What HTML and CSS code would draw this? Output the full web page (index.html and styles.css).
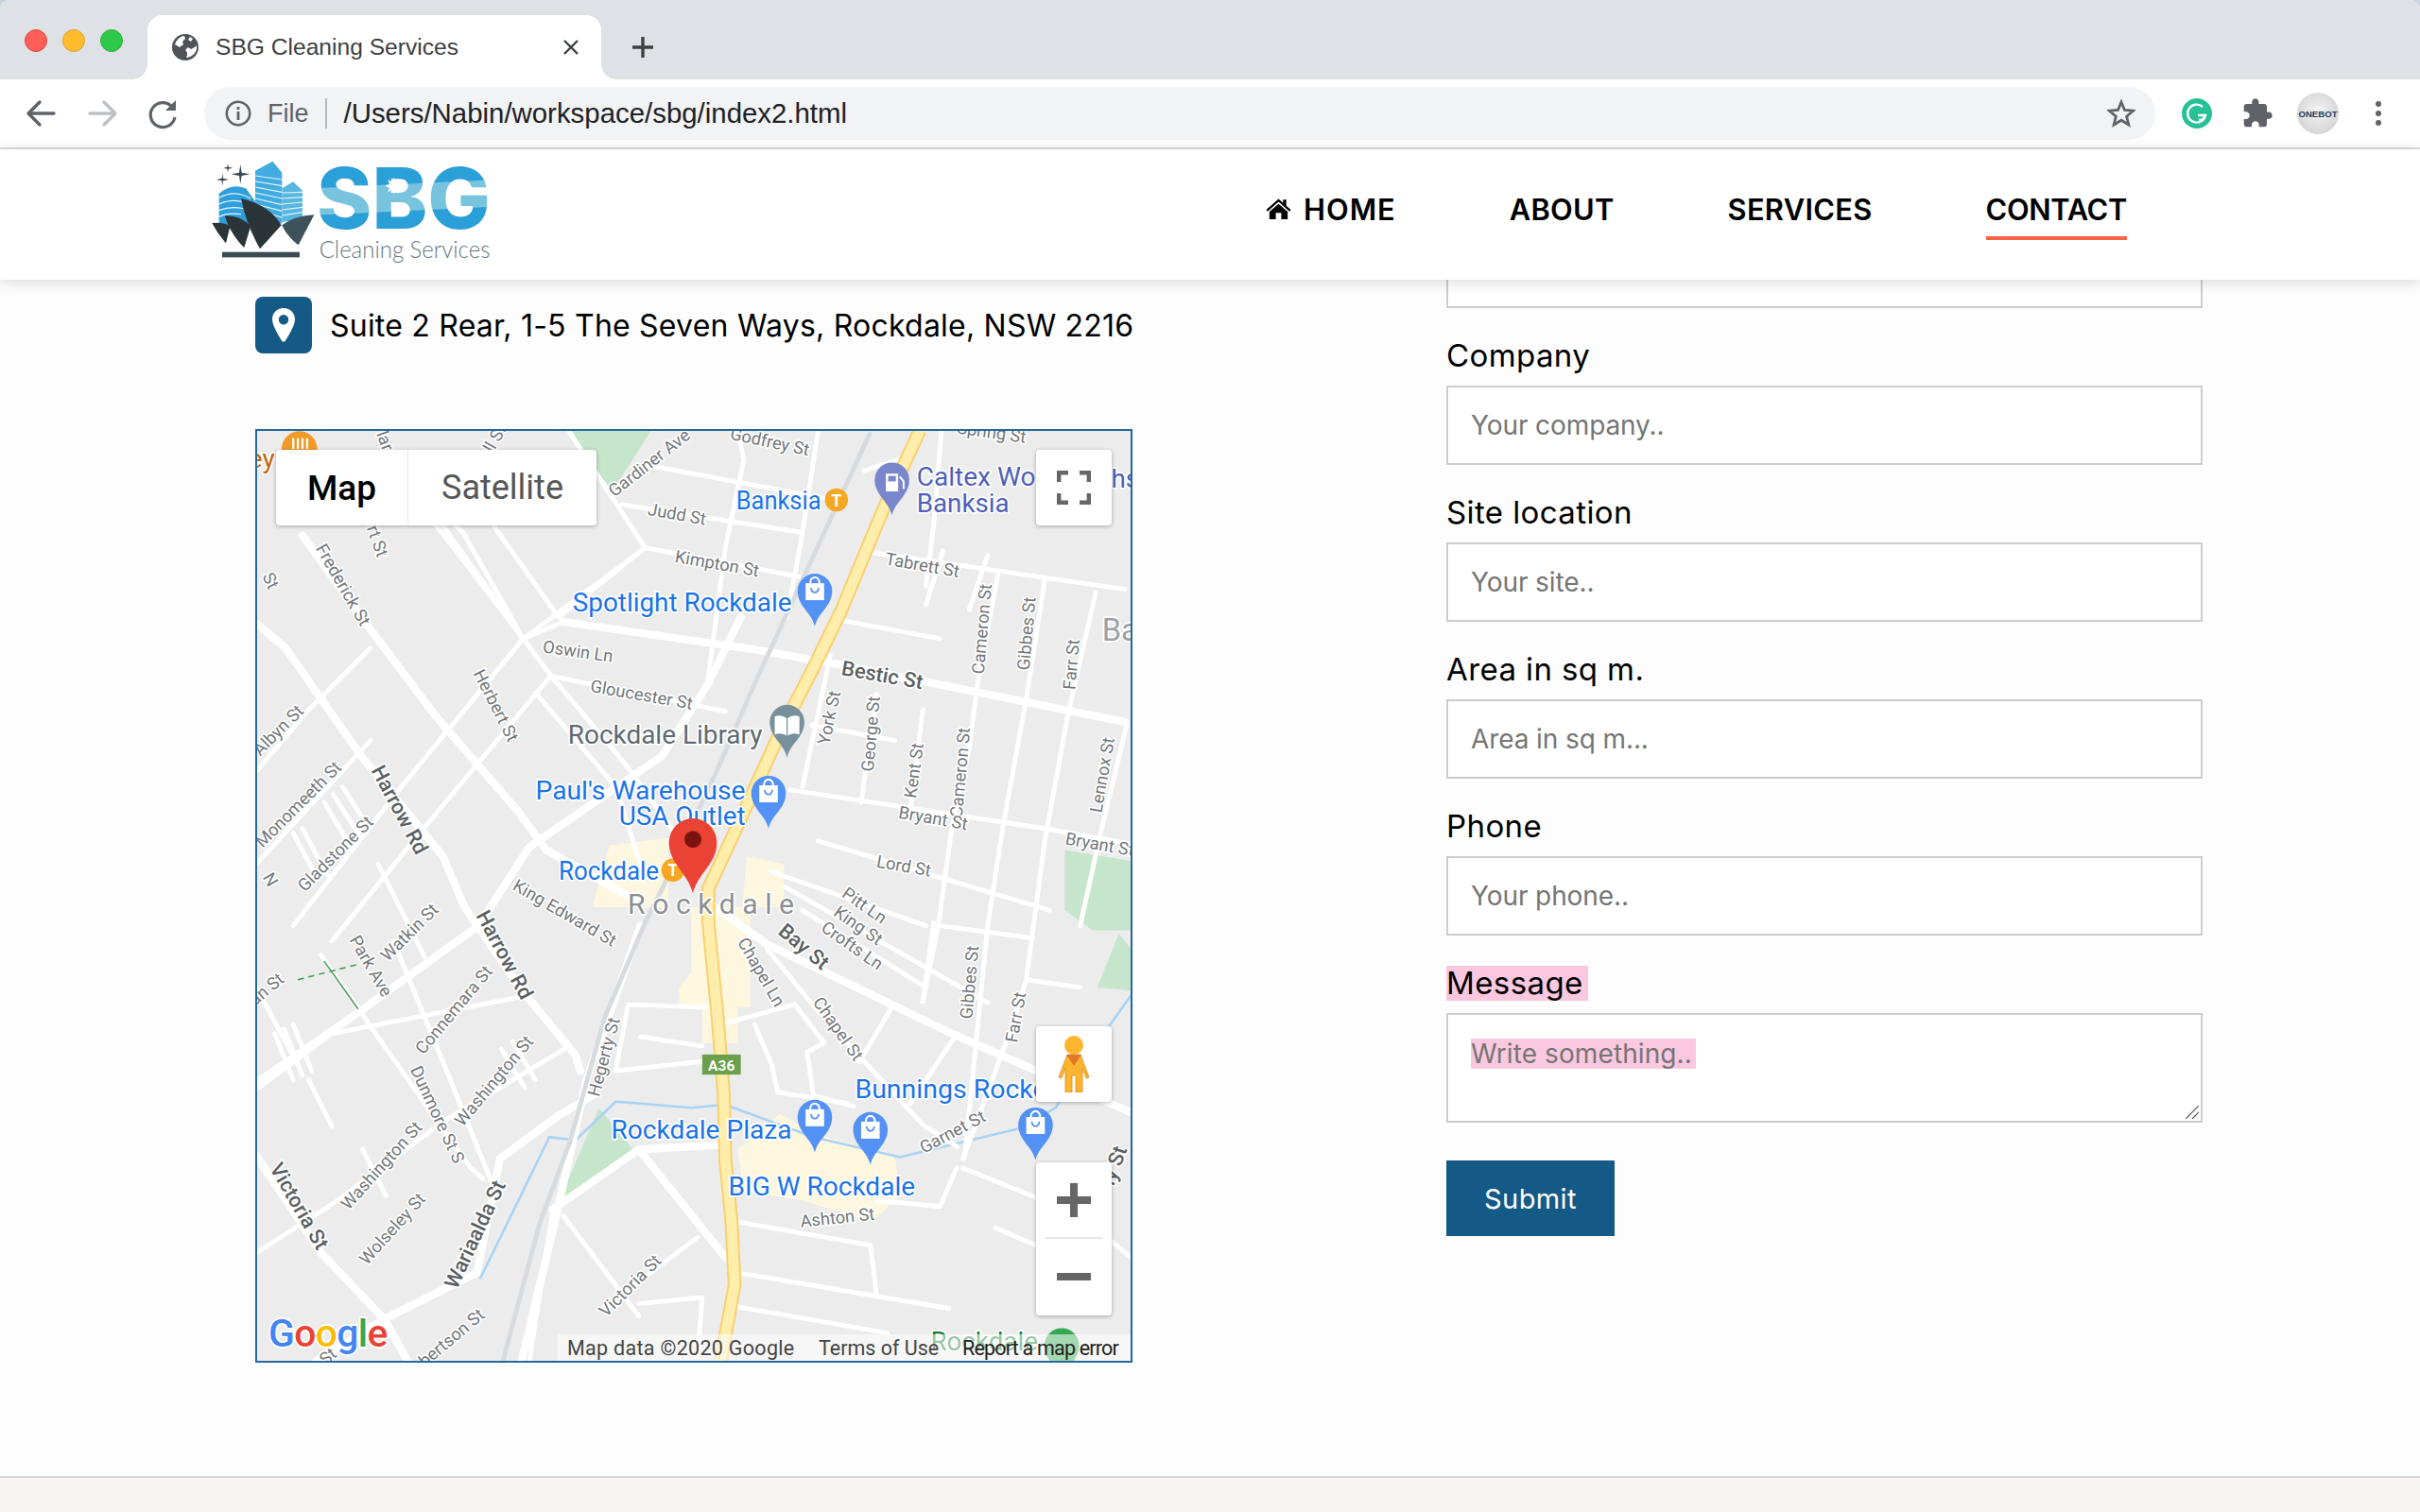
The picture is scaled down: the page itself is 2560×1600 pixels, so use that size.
FILE: index.html
```html
<!DOCTYPE html>
<html lang="en">
<head>
<meta charset="utf-8">
<title>SBG Cleaning Services</title>
<link rel="stylesheet" href="styles.css">
</head>
<body>
<div class="window">
  <div class="tabstrip">
    <div class="lights"><span class="light red"></span><span class="light amber"></span><span class="light green"></span></div>
    <div class="tab">
      <svg class="globe" viewBox="0 0 28 28"><circle cx="14" cy="14" r="14" fill="#4f5358"/><path d="M3 11 C5 5 10 2 13 2 L14 5 L11 8 L12 11 L8 14 Z M15 25 C17 21 16 19 14 17 L17 14 L20 16 L24 14 L26 12 C27 18 23 24 15 25 Z M19 3 L22 5 L20 8 L17 6 Z" fill="#fff"/></svg>
      <span class="tab-title">SBG Cleaning Services</span>
      <svg class="tab-close" viewBox="0 0 18 18"><path d="M2 2 L16 16 M16 2 L2 16" stroke="#3c4043" stroke-width="2.4" fill="none"/></svg>
    </div>
    <svg class="newtab" viewBox="0 0 24 24"><path d="M12 1 V23 M1 12 H23" stroke="#3c4043" stroke-width="3.4" fill="none"/></svg>
  </div>

  <div class="toolbar">
    <svg class="tool" viewBox="0 0 40 40"><path d="M33 20 H8 M18 8 L6 20 L18 32" stroke="#5f6368" stroke-width="3.4" fill="none" stroke-linecap="round" stroke-linejoin="round"/></svg>
    <svg class="tool" viewBox="0 0 40 40"><path d="M7 20 H32 M22 8 L34 20 L22 32" stroke="#bdc1c6" stroke-width="3.4" fill="none" stroke-linecap="round" stroke-linejoin="round"/></svg>
    <svg class="tool" viewBox="0 0 40 40"><path d="M30 13 A13 13 0 1 0 33 24" stroke="#5f6368" stroke-width="3.2" fill="none"/><path d="M34 6 V17 H23 Z" fill="#5f6368"/></svg>
    <div class="address">
      <svg class="info" viewBox="0 0 28 28"><circle cx="14" cy="14" r="12.2" stroke="#5f6368" stroke-width="2.6" fill="none"/><rect x="12.6" y="12" width="2.8" height="9" fill="#5f6368"/><rect x="12.6" y="7" width="2.8" height="3" fill="#5f6368"/></svg>
      <span class="scheme">File</span>
      <span class="sep"></span>
      <span class="url">/Users/Nabin/workspace/sbg/index2.html</span>
      <svg class="star" viewBox="0 0 30 30"><path d="M15 3 L18.5 11.5 L27.5 12.2 L20.6 18.2 L22.8 27 L15 22.2 L7.2 27 L9.4 18.2 L2.5 12.2 L11.5 11.5 Z" stroke="#5f6368" stroke-width="2.8" fill="none" stroke-linejoin="miter"/></svg>
    </div>
    <div class="extensions">
      <svg class="tool" viewBox="0 0 40 40"><circle cx="20" cy="20" r="16" fill="#26c196"/><path d="M26 13 A9.5 9.5 0 1 0 29 22 H21" stroke="#fff" stroke-width="2.4" fill="none"/><path d="M22 27 L27 26 L28 21" stroke="#fff" stroke-width="2" fill="none"/></svg>
      <svg class="tool" viewBox="-2 -2 28 28"><path fill="#5f6368" d="M20.5 11H19V7c0-1.1-.9-2-2-2h-4V3.5C13 2.12 11.88 1 10.5 1S8 2.12 8 3.5V5H4c-1.1 0-1.99.9-1.99 2v3.8H3.5c1.49 0 2.7 1.21 2.7 2.7s-1.21 2.7-2.7 2.7H2V20c0 1.1.9 2 2 2h3.8v-1.5c0-1.49 1.21-2.7 2.7-2.7 1.49 0 2.7 1.21 2.7 2.7V22H17c1.1 0 2-.9 2-2v-4h1.5c1.38 0 2.5-1.12 2.5-2.5S21.88 11 20.5 11z"/></svg>
      <span class="avatar">ONEBOT</span>
      <svg class="tool" viewBox="0 0 40 40"><circle cx="20" cy="10" r="3" fill="#5f6368"/><circle cx="20" cy="20" r="3" fill="#5f6368"/><circle cx="20" cy="30" r="3" fill="#5f6368"/></svg>
    </div>
  </div>

  <header class="site-header">
    <svg class="logo" viewBox="0 0 960 375">
      <defs>
        <linearGradient id="sbgfill" x1="0" y1="0" x2="0.08" y2="1">
          <stop offset="0" stop-color="#2b9fd8"/><stop offset="0.40" stop-color="#2b9fd8"/>
          <stop offset="0.41" stop-color="#78c4df"/><stop offset="0.66" stop-color="#78c4df"/>
          <stop offset="0.67" stop-color="#2b9fd8"/><stop offset="1" stop-color="#2b9fd8"/>
        </linearGradient>
      </defs>
      <path d="M50 240 V135 Q90 100 135 118 L165 160 V240 Z" fill="#2f9fdc"/>
      <path d="M165 62 L220 32 L250 68 V230 L165 205 Z" fill="#42abe0"/>
      <path d="M250 118 L285 97 L315 125 V215 L250 225 Z" fill="#58b6e0"/>
      <path d="M50 148 Q100 120 150 150 M50 168 Q100 145 160 172 M50 188 Q100 168 165 192 M50 208 Q80 194 120 200 M165 78 L250 90 M165 96 L250 110 M165 114 L250 130 M165 132 L250 150 M165 150 L250 170 M165 168 L250 190 M165 186 L250 210 M250 132 L315 130 M250 150 L315 146 M250 168 L315 162 M250 186 L315 178 M250 204 L315 194" stroke="#e8f6fc" stroke-width="3.6" fill="none"/>
      <path d="M28 228 Q70 225 85 240 L72 292 Q45 262 28 228 Z" fill="#2b3437"/>
      <path d="M68 205 Q125 205 150 240 L130 306 Q85 262 68 205 Z" fill="#2b3437"/>
      <path d="M120 150 Q210 170 248 235 L180 310 Q135 230 120 150 Z" fill="#2b3437"/>
      <path d="M250 235 Q290 205 352 202 L302 298 Q265 270 250 235 Z" fill="#3d525a"/>
      <rect x="60" y="320" width="246" height="17" fill="#3a4b52"/>
      <path d="M118 42 L122 68 L148 73 L122 78 L118 104 L114 78 L88 73 L114 68 Z M78 38 L80 50 L94 53 L80 56 L78 68 L76 56 L64 53 L76 50 Z M61 70 L63 86 L81 90 L63 94 L61 110 L59 94 L41 90 L59 86 Z" fill="#3a4a50"/>
      <text class="logo-mark" x="360" y="245" textLength="552" lengthAdjust="spacingAndGlyphs" fill="url(#sbgfill)">SBG</text>
      <path d="M605 84 L611 98 L624 90 L619 104 L634 110 L619 116 L624 130 L611 122 L605 136 L599 122 L586 130 L591 116 L576 110 L591 104 L586 90 L599 98 Z" fill="#fff"/>
      <text class="logo-sub" x="368" y="340" textLength="542" lengthAdjust="spacingAndGlyphs">Cleaning Services</text>
    </svg>
    <nav class="nav">
      <a class="nav-link nav-home"><svg class="home-icon" viewBox="0 0 28 24"><path d="M14 1 L19 5.5 V2 H22.5 V8.6 L27.5 13 L26 14.8 L14 4.2 L2 14.8 L0.5 13 Z M14 6.5 L24 15 V23.5 H17 V16.5 H11 V23.5 H4 V15 Z" fill="#000"/></svg>HOME</a>
      <a class="nav-link">ABOUT</a>
      <a class="nav-link">SERVICES</a>
      <a class="nav-link nav-current">CONTACT</a>
    </nav>
  </header>

  <main class="content">
    <section class="location">
      <div class="address-row">
        <span class="pin-box"><svg class="pin-icon" viewBox="0 0 24 36"><path fill-rule="evenodd" d="M12 0 C5 0 0 5.2 0 12 C0 19 8 31 10 34.5 C11 36.2 13 36.2 14 34.5 C16 31 24 19 24 12 C24 5.2 19 0 12 0 Z M12 7 A5.2 5.2 0 1 1 12 17.4 A5.2 5.2 0 1 1 12 7 Z" fill="#fff"/></svg></span>
        <span class="address-text">Suite 2 Rear, 1-5 The Seven Ways, Rockdale, NSW 2216</span>
      </div>
      <div class="map">
        <svg class="map-canvas" viewBox="166.6 279.3 566 602.7" preserveAspectRatio="none">
          <defs>
            <g id="pin"><path d="M0 0 C-2 -9 -11.2 -13 -11.2 -23 A11.2 11.2 0 1 1 11.2 -23 C11.2 -13 2 -9 0 0 Z"/></g>
            <g id="bag"><path d="M-6 -28 H6 V-17 H-6 Z" fill="#fff"/><path d="M-3 -28 C-3 -33 3 -33 3 -28" stroke="#fff" stroke-width="1.3" fill="none"/><path d="M-2.5 -25 C-2 -21 2 -21 2.5 -25" stroke="#5491f5" stroke-width="1.1" fill="none"/></g>
          </defs>
          <rect x="160" y="270" width="580" height="620" fill="#ececec"/>
          <g fill="#c6e6cb">
            <path d="M367 279 H422 L397 318 L382 300 Z"/>
            <path d="M690 551 L733 558 V603 H708 L690 590 Z"/>
            <path d="M711 640 L725 605 L733 615 V642 Z"/>
            <path d="M360 784 L388 718 L411 746 Z"/>
          </g>
          <g fill="#fef7e0">
            <path d="M384 588 L395 548 L433 543 V588 Z"/>
            <path d="M481 588 L484 555 L508 560 V588 Z"/>
            <path d="M448 588 H486 V653 H478 V676 H455 V653 H440 V640 L448 630 Z"/>
            <path d="M478 745 L505 722 L530 735 L580 750 L583 775 L565 792 L520 778 L482 772 Z"/>
          </g>
          <path class="water" d="M311 829 L356 737 L373 739 L399 714 L448 718 L470 716 L527 737 L583 750 L662 731 L684 718 L718 666 L733 645"/>
          <g class="road-minor">
            <path d="M369 280 L418 355 L519 374 M403 327 L519 345 M422 302 L545 325 M564 358 L729 382 M545 402 L609 414 M611 357 L600 392 M640 360 L628 395"/>
            <path d="M478 280 L482 298 L470 355 L459 439 M530 280 L520 345 L510 400 M560 305 L582 298 M610 280 L605 340 L600 380"/>
            <path d="M418 355 L339 414 L260 510 L190 600 M339 414 L294 355 L282 340 M320 341 L362 400 L418 355 M365 403 L339 414 M250 300 L300 345 L339 414"/>
            <path d="M283 335 L339 414 L357 438 L405 495 L452 560 M357 438 L272 540 L215 610 M356 438 L470 461 M347 449 L399 510 L415 560"/>
            <path d="M647 371 L635 433 L628 484 L617 535 L608 600 L598 649 M677 376 L665 453 L650 535 L640 600 L625 750 M710 384 L692 463 L677 545 L665 635 L654 670 L624 751 M730 470 L712 545 L700 600"/>
            <path d="M538 425 L520 510 M568 450 L558 520 M598 460 L590 525 M526 470 L580 480 M512 512 L677 537 L733 547 M530 545 L680 590 M500 565 L600 600 M520 590 L600 640 M509 575 L640 650"/>
            <path d="M166 500 L200 460 L240 420 M166 560 L240 480 M166 706 L215 670 L343 645 M166 812 L219 778 L287 727 L369 678 M208 619 L249 678 L305 757 L313 764 M255 610 L300 720 L320 770 M245 560 L275 620 M166 640 L193 690"/>
            <path d="M210 520 L225 545 M216 515 L232 540 M222 510 L238 535 M190 540 L206 570 M196 537 L212 567 M178 670 L190 700 M184 667 L196 697 M190 664 L202 694 M325 680 L340 705 M332 675 L347 700 M200 700 L215 730 M235 745 L250 775"/>
            <path d="M407 651 L459 653 M407 651 L399 694 L455 688 M415 672 L455 678 M467 664 L515 651 M497 615 L523 647 L560 688 L598 729 L620 743 M515 651 L534 676 L523 682 L527 710 L553 717 M489 664 L500 690 L504 708 L549 715 M579 651 L557 688 M620 670 L590 715 M609 600 L669 608 M605 598 L598 649 M665 635 L700 640"/>
            <path d="M478 792 L564 807 L568 839 M478 825 L615 848 M478 847 L575 864 M414 845 L455 841 L452 880 M452 802 L392 847 M365 788 L414 853 M358 786 L343 882 M620 757 L609 782 L568 778 M624 757 L671 776 M645 796 L671 807 M690 780 L733 815"/>
          </g>
          <g class="road-major">
            <path d="M166 404 L185 420 L234 490 L287 555 L301 588 L339 643 L373 684 L376 694"/>
            <path d="M196 347 L234 400 L283 465 L335 525 L354 551 L415 585"/>
            <path d="M365 403 L489 421 L545 431"/>
            <path d="M541 430 L729 468"/>
            <path d="M459 585 L497 612 L617 670 L733 721"/>
            <path d="M384 710 L362 723 L324 751 L309 825 L249 855 L205 882"/>
            <path d="M358 784 L414 745 L467 742"/>
            <path d="M414 745 L470 815"/>
            <path d="M166 702 L234 655 L310 600 L343 549 L429 490 L459 443 L480 400"/>
            <path d="M166 749 L208 812 L249 855 L264 882"/>
            <path d="M338 882 L360 790 L380 700 L415 600"/>
          </g>
          <g class="rail"><path d="M564 280 L508 402 L489 443 L467 494 L429 576 L418 598 L392 659 L369 741 L350 792 L328 874 L326 882"/></g>
          <path class="highway-edge" d="M596 279 L572 331 L545 396 L527 433 L504 478 L478 535 L459 576 L459 598 L465 659 L469 710 L470 751 L474 792 L476 833 L467 882"/>
          <path class="highway" d="M596 279 L572 331 L545 396 L527 433 L504 478 L478 535 L459 576 L459 598 L465 659 L469 710 L470 751 L474 792 L476 833 L467 882"/>
          <path class="park-path" d="M193 635 L232 625" stroke-dasharray="4 3"/>
          <path class="park-path" d="M210 623 L232 654"/>

          <g class="st">
            <text x="498" y="290" transform="rotate(12 498 290)">Godfrey St</text>
            <text x="423" y="303" transform="rotate(-38 423 303)">Gardiner Ave</text>
            <text x="642" y="284" transform="rotate(8 642 284)">Spring St</text>
            <text x="438" y="337" transform="rotate(10 438 337)">Judd St</text>
            <text x="464" y="369" transform="rotate(10 464 369)">Kimpton St</text>
            <text x="597" y="370" transform="rotate(10 597 370)">Tabrett St</text>
            <text x="219" y="381" transform="rotate(60 219 381)">Frederick St</text>
            <text x="374" y="426" transform="rotate(8 374 426)">Oswin Ln</text>
            <text x="415" y="454" transform="rotate(10 415 454)">Gloucester St</text>
            <text x="318" y="459" transform="rotate(63 318 459)">Herbert St</text>
            <text x="541" y="466" transform="rotate(-78 541 466)">York St</text>
            <text x="568" y="476" transform="rotate(-85 568 476)">George St</text>
            <text x="596" y="500" transform="rotate(-82 596 500)">Kent St</text>
            <text x="640" y="408" transform="rotate(-85 640 408)">Cameron St</text>
            <text x="626" y="501" transform="rotate(-85 626 501)">Cameron St</text>
            <text x="669" y="411" transform="rotate(-85 669 411)">Gibbes St</text>
            <text x="698" y="431" transform="rotate(-85 698 431)">Farr St</text>
            <text x="718" y="503" transform="rotate(-80 718 503)">Lennox St</text>
            <text x="604" y="534" transform="rotate(10 604 534)">Bryant St</text>
            <text x="712" y="551" transform="rotate(10 712 551)">Bryant St</text>
            <text x="585" y="565" transform="rotate(10 585 565)">Lord St</text>
            <text x="183" y="476" transform="rotate(-45 183 476)">Albyn St</text>
            <text x="196" y="524" transform="rotate(-45 196 524)">Monomeeth St</text>
            <text x="220" y="556" transform="rotate(-45 220 556)">Gladstone St</text>
            <text x="558" y="590" transform="rotate(35 558 590)">Pitt Ln</text>
            <text x="554" y="603" transform="rotate(35 554 603)">King St</text>
            <text x="550" y="616" transform="rotate(35 550 616)">Crofts Ln</text>
            <text x="490" y="632" transform="rotate(60 490 632)">Chapel Ln</text>
            <text x="540" y="669" transform="rotate(55 540 669)">Chapel St</text>
            <text x="632" y="637" transform="rotate(-85 632 637)">Gibbes St</text>
            <text x="662" y="660" transform="rotate(-80 662 660)">Farr St</text>
            <text x="364" y="595" transform="rotate(30 364 595)">King Edward St</text>
            <text x="268" y="607" transform="rotate(-45 268 607)">Watkin St</text>
            <text x="237" y="628" transform="rotate(60 237 628)">Park Ave</text>
            <text x="175" y="644" transform="rotate(-40 175 644)">an St</text>
            <text x="297" y="657" transform="rotate(-50 297 657)">Connemara St</text>
            <text x="280" y="724" transform="rotate(65 280 724)">Dunmore St S</text>
            <text x="323" y="703" transform="rotate(-50 323 703)">Washington St</text>
            <text x="250" y="758" transform="rotate(-48 250 758)">Washington St</text>
            <text x="257" y="799" transform="rotate(-48 257 799)">Wolseley St</text>
            <text x="395" y="686" transform="rotate(-75 395 686)">Hegerty St</text>
            <text x="619" y="737" transform="rotate(-28 619 737)">Garnet St</text>
            <text x="543" y="793" transform="rotate(-6 543 793)">Ashton St</text>
            <text x="411" y="836" transform="rotate(-45 411 836)">Victoria St</text>
            <text x="295" y="870" transform="rotate(-40 295 870)">bertson St</text>
            <text x="241" y="352" transform="rotate(70 241 352)">rt St</text>
            <text x="172" y="378" transform="rotate(65 172 378)">St</text>
            <text x="172" y="572" transform="rotate(60 172 572)">N</text>
            <text x="246" y="287" transform="rotate(70 246 287)">lar</text>
            <text x="324" y="286" transform="rotate(-60 324 286)">ll St</text>
            <text x="215" y="882" transform="rotate(-40 215 882)">St</text>
          </g>
          <g class="st-strong">
            <text x="571" y="442" transform="rotate(10 571 442)">Bestic St</text>
            <text x="255" y="527" transform="rotate(62 255 527)">Harrow Rd</text>
            <text x="323" y="621" transform="rotate(62 323 621)">Harrow Rd</text>
            <text x="518" y="617" transform="rotate(40 518 617)">Bay St</text>
            <text x="190" y="784" transform="rotate(60 190 784)">Victoria St</text>
            <text x="312" y="802" transform="rotate(-65 312 802)">Wariaalda St</text>
            <text x="726" y="757" transform="rotate(-70 726 757)">ly St</text>
          </g>
          <text class="suburb" x="463" y="592">Rockdale</text>
          <text class="suburb-b" x="714" y="415">Ba</text>

          <use href="#pin" x="578" y="334" fill="#7986cb"/>
          <path d="M574 307 H582 V318.5 H574 Z" fill="#fff"/><path d="M583 309 L585.5 312 V317" fill="none" stroke="#fff" stroke-width="1.2"/><rect x="575.5" y="308.5" width="5" height="3.5" fill="#7986cb"/>
          <use href="#pin" x="528" y="406" fill="#5491f5"/><use href="#bag" x="528" y="406"/>
          <use href="#pin" x="510" y="491" fill="#78909c"/>
          <path d="M510 466 C507 463.5 504 463.5 502 464.5 V476 C505 475 508 475.5 510 477 C512 475.5 515 475 518 476 V464.5 C516 463.5 513 463.5 510 466 Z" fill="#fff"/><path d="M510 466 V477" stroke="#78909c" stroke-width="0.8"/>
          <use href="#pin" x="498" y="537" fill="#5491f5"/><use href="#bag" x="498" y="537"/>
          <use href="#pin" x="528" y="747" fill="#5491f5"/><use href="#bag" x="528" y="747"/>
          <use href="#pin" x="564" y="755" fill="#5491f5"/><use href="#bag" x="564" y="755"/>
          <use href="#pin" x="671" y="752" fill="#5491f5"/><use href="#bag" x="671" y="752"/>

          <circle cx="194" cy="291" r="11.5" fill="#f09a27"/>
          <path d="M190 284 V291 M193 284 V291 M196 284 V291 M199 284 V291" stroke="#fff" stroke-width="1.4"/>
          <text class="poi-food" x="161" y="303">ey</text>
          <circle cx="542" cy="324" r="7.5" fill="#f5a623"/><text class="t-mark" x="542" y="328">T</text>
          <circle cx="436" cy="564" r="7.5" fill="#f5a623"/><text class="t-mark" x="436" y="568">T</text>

          <text class="poi" x="477" y="330" textLength="55" lengthAdjust="spacingAndGlyphs">Banksia</text>
          <text class="poi-fuel" x="594" y="315" textLength="77" lengthAdjust="spacingAndGlyphs">Caltex Wo</text>
          <text class="poi-fuel" x="594" y="332" textLength="60" lengthAdjust="spacingAndGlyphs">Banksia</text>
          <text class="poi-fuel" x="720" y="316">hs</text>
          <text class="poi" x="371" y="396" textLength="142" lengthAdjust="spacingAndGlyphs">Spotlight Rockdale</text>
          <text class="poi-lib" x="368" y="482" textLength="126" lengthAdjust="spacingAndGlyphs">Rockdale Library</text>
          <text class="poi" x="347" y="518" textLength="136" lengthAdjust="spacingAndGlyphs">Paul's Warehouse</text>
          <text class="poi" x="401" y="535" textLength="82" lengthAdjust="spacingAndGlyphs">USA Outlet</text>
          <text class="poi" x="362" y="570" textLength="65" lengthAdjust="spacingAndGlyphs">Rockdale</text>
          <text class="poi" x="554" y="712" textLength="148" lengthAdjust="spacingAndGlyphs">Bunnings Rockdale</text>
          <text class="poi" x="396" y="738" textLength="117" lengthAdjust="spacingAndGlyphs">Rockdale Plaza</text>
          <text class="poi" x="472" y="775" textLength="121" lengthAdjust="spacingAndGlyphs">BIG W Rockdale</text>
          <text class="poi-green" x="603" y="875">Rockdale</text>
          <use href="#pin" x="688" y="895" fill="#34a853"/>

          <rect x="455" y="683.5" width="25" height="13" fill="#6a9f4b"/>
          <text class="shield" x="467.5" y="694">A36</text>

          <path d="M449 579 C446 566 433.5 560 433.5 546 A15.5 15.5 0 1 1 464.5 546 C464.5 560 452 566 449 579 Z" fill="#ea4335"/>
          <circle cx="449" cy="544" r="5.5" fill="#7b1310"/>

          <text class="google" x="174" y="873"><tspan fill="#4285f4">G</tspan><tspan fill="#ea4335">o</tspan><tspan fill="#fbbc05">o</tspan><tspan fill="#4285f4">g</tspan><tspan fill="#34a853">l</tspan><tspan fill="#ea4335">e</tspan></text>
        </svg>

        <div class="map-type"><span class="type-btn type-on">Map</span><span class="type-btn">Satellite</span></div>
        <div class="map-btn fullscreen"><svg class="ctl-icon" viewBox="0 0 36 36"><path d="M2.2 12 V2.2 H12 M24 2.2 H33.8 V12 M33.8 24 V33.8 H24 M12 33.8 H2.2 V24" stroke="#666" stroke-width="4.4" fill="none"/></svg></div>
        <div class="map-btn pegman"><svg class="peg-icon" viewBox="0 0 34 60"><circle cx="17" cy="10" r="10" fill="#fdb52f"/><path d="M10 20 H24 L33 44 L30 45 L26 34 V60 H19 V42 H15 V60 H8 V34 L4 45 L1 44 Z" fill="#fdb52f" stroke="#d98c1a" stroke-width="0.8"/><path d="M9 20 H25 L17 32 Z" fill="#e0762a"/></svg></div>
        <div class="map-zoom">
          <svg class="ctl-icon" viewBox="0 0 36 36"><path d="M18 0 V36 M0 18 H36" stroke="#666" stroke-width="8" fill="none"/></svg>
          <span class="zoom-sep"></span>
          <svg class="ctl-icon" viewBox="0 0 36 36"><path d="M0 18 H36" stroke="#666" stroke-width="8" fill="none"/></svg>
        </div>
        <div class="attribution"><span class="attr-data">Map data ©2020 Google</span><span class="attr-terms">Terms of Use</span><span class="attr-report">Report a map error</span></div>
      </div>
    </section>

    <form class="quote-form">
      <input class="field field-first" type="text" aria-label="Email">
      <label class="field-label">Company</label>
      <input class="field" type="text" placeholder="Your company..">
      <label class="field-label">Site location</label>
      <input class="field" type="text" placeholder="Your site..">
      <label class="field-label">Area in sq m.</label>
      <input class="field" type="text" placeholder="Area in sq m...">
      <label class="field-label">Phone</label>
      <input class="field" type="text" placeholder="Your phone..">
      <label class="field-label"><span class="marked">Message</span></label>
      <div class="area-wrap">
        <textarea class="field field-area" placeholder="Write something.."></textarea>
        <svg class="grip" viewBox="0 0 14 14"><path d="M0 14 L14 0 M7 14 L14 7" stroke="#555" stroke-width="1.2" fill="none"/></svg>
      </div>
      <button class="submit" type="button">Submit</button>
    </form>
  </main>

  <footer class="site-footer"></footer>
</div>
</body>
</html>
```

FILE: styles.css
```css
* { box-sizing: border-box; }
html, body { margin: 0; padding: 0; }
body { width: 2560px; height: 1600px; background: #c9d3df; overflow: hidden; }
.window { width: 2560px; height: 1600px; display: flex; flex-direction: column; border-radius: 10px 10px 0 0; overflow: hidden; background: #fdfdfd; }

/* browser chrome */
.tabstrip { height: 84px; flex: none; background: #dee1e6; display: flex; align-items: flex-end; }
.lights { display: flex; gap: 16px; padding-left: 26px; align-self: flex-start; padding-top: 31px; }
.light { width: 24px; height: 24px; border-radius: 50%; }
.red { background: #ff5f57; border: 1px solid #e0443e; }
.amber { background: #ffbd2e; border: 1px solid #dea123; }
.green { background: #2fc94a; border: 1px solid #2aac3e; }
.tab { position: relative; margin-left: 26px; width: 480px; height: 68px; background: #fff; border-radius: 16px 16px 0 0; display: flex; align-items: center; padding: 0 23px 0 26px; }
.tab::before, .tab::after { content: ""; position: absolute; bottom: 0; width: 16px; height: 16px; }
.tab::before { left: -16px; background: radial-gradient(circle at 0 0, transparent 15.5px, #fff 16px); }
.tab::after { right: -16px; background: radial-gradient(circle at 100% 0, transparent 15.5px, #fff 16px); }
.globe { width: 28px; height: 28px; flex: none; }
.tab-title { margin-left: 18px; font: 400 24.6px "Liberation Sans", sans-serif; color: #3c4043; flex: 1; white-space: nowrap; }
.tab-close { width: 18px; height: 18px; flex: none; }
.newtab { width: 24px; height: 24px; margin: 0 0 22px 32px; flex: none; }

.toolbar { height: 74px; flex: none; background: #fff; border-bottom: 2px solid #dcdce2; display: flex; align-items: center; padding: 0 24px 0 24px; gap: 24px; }
.tool { width: 40px; height: 40px; flex: none; }
.address { width: 2064px; height: 56px; border-radius: 28px; background: #f1f3f4; display: flex; align-items: center; padding: 0 21px 0 22px; flex: none; }
.info { width: 28px; height: 28px; flex: none; }
.scheme { margin-left: 17px; font: 400 27px "Liberation Sans", sans-serif; color: #5f6368; }
.sep { width: 2px; height: 32px; background: #b5b8bb; margin: 0 18px 0 17px; flex: none; }
.url { font: 400 29.4px "Liberation Sans", sans-serif; color: #202124; flex: 1; white-space: nowrap; }
.star { width: 30px; height: 30px; flex: none; }
.extensions { display: flex; align-items: center; gap: 24px; }
.avatar { width: 44px; height: 44px; margin: 0 -2px; flex: none; border-radius: 50%; background: radial-gradient(circle at 50% 45%, #f4f4f4 0, #c9c9c9 100%); font: 700 9.6px "Liberation Sans", sans-serif; color: #1d3f5e; display: flex; align-items: center; justify-content: center; white-space: nowrap; }

/* site header */
.site-header { position: relative; z-index: 2; height: 138px; flex: none; background: #fff; box-shadow: 0 2px 14px rgba(0, 0, 0, .16); display: flex; align-items: flex-start; justify-content: space-between; padding: 2px 310px 0 215px; }
.logo { width: 320px; height: 125px; flex: none; overflow: visible; }
.logo-mark { font: 800 268px Inter, sans-serif; }
.logo-sub { font: 300 74px Lato, sans-serif; fill: #68787e; }
.nav { display: flex; gap: 120px; padding-top: 46px; }
.nav-link { display: flex; align-items: center; height: 48px; padding-bottom: 14px; border-bottom: 4px solid transparent; font: 600 30.8px Inter, sans-serif; letter-spacing: .3px; color: #000; white-space: nowrap; }
.nav-home { letter-spacing: 1px; }
.nav-current { border-bottom-color: #ff6347; letter-spacing: -.3px; }
.home-icon { width: 27px; height: 24px; margin-right: 13px; flex: none; }

/* content */
.content { flex: 1; min-height: 0; overflow: hidden; display: flex; padding-left: 270px; }
.location { width: 928px; flex: none; padding-top: 18px; }
.address-row { display: flex; align-items: center; gap: 19px; height: 60px; }
.pin-box { width: 60px; height: 60px; border-radius: 8px; background: #155a87; display: flex; align-items: center; justify-content: center; flex: none; }
.pin-icon { width: 24px; height: 36px; }
.address-text { font: 400 32px Inter, sans-serif; letter-spacing: .22px; color: #000; white-space: nowrap; }
.map { position: relative; margin-top: 80px; width: 928px; height: 988px; border: 2px solid #24689a; overflow: hidden; }
.map-canvas { display: block; width: 924px; height: 984px; }

.road-minor path { fill: none; stroke: #fff; stroke-width: 3; stroke-linecap: round; stroke-linejoin: round; }
.road-major path { fill: none; stroke: #fff; stroke-width: 5; stroke-linecap: round; stroke-linejoin: round; }
.rail path { fill: none; stroke: #d8dbde; stroke-width: 3; }
.water { fill: none; stroke: #a9d3f5; stroke-width: 1.6; }
.highway-edge { fill: none; stroke: #f9cf6e; stroke-width: 9; stroke-linejoin: round; }
.highway { fill: none; stroke: #feedab; stroke-width: 6.6; stroke-linejoin: round; }
.park-path { fill: none; stroke: #4a9f5b; stroke-width: 1; }

.st text, .st-strong text, .poi, .poi-fuel, .poi-lib, .poi-green, .poi-food, .suburb, .suburb-b { paint-order: stroke; stroke: #fff; stroke-width: 2px; stroke-linejoin: round; }
.st text { font: 400 11.2px Roboto, sans-serif; fill: #72777b; text-anchor: middle; }
.st-strong text { font: 500 13.4px Roboto, sans-serif; fill: #5a5f63; text-anchor: middle; }
.suburb { font: 400 18.5px Roboto, sans-serif; fill: #8b8f92; text-anchor: middle; letter-spacing: 4.6px; }
.suburb-b { font: 400 20px Roboto, sans-serif; fill: #9aa0a6; }
.poi { font: 400 17px Roboto, sans-serif; fill: #1a73e8; }
.poi-fuel { font: 400 17px Roboto, sans-serif; fill: #4f5fb8; }
.poi-lib { font: 400 17px Roboto, sans-serif; fill: #5d6a72; }
.poi-green { font: 400 17px Roboto, sans-serif; fill: #188038; }
.poi-food { font: 400 17px Roboto, sans-serif; fill: #c5650b; }
.t-mark { font: 700 11px Roboto, sans-serif; fill: #fff; text-anchor: middle; }
.shield { font: 700 9.5px Roboto, sans-serif; fill: #fff; text-anchor: middle; }
.google { font: 500 25px Roboto, sans-serif; letter-spacing: -0.4px; paint-order: stroke; stroke: #fff; stroke-width: 2px; }

.map-type { position: absolute; left: 20px; top: 20px; display: flex; background: #fff; border-radius: 4px; box-shadow: 0 1px 4px rgba(0, 0, 0, .3); height: 80px; }
.type-btn { display: flex; align-items: center; justify-content: center; width: 199px; font: 400 36px Roboto, sans-serif; color: #565656; }
.type-btn.type-on { width: 140px; font-size: 37px; font-weight: 500; color: #000; border-right: 1px solid #e6e6e6; }
.map-btn { position: absolute; left: 824px; width: 80px; height: 80px; background: #fff; border-radius: 4px; box-shadow: 0 1px 4px rgba(0, 0, 0, .3); display: flex; align-items: center; justify-content: center; }
.fullscreen { top: 20px; }
.pegman { top: 630px; }
.ctl-icon { width: 36px; height: 36px; flex: none; }
.peg-icon { width: 34px; height: 60px; }
.map-zoom { position: absolute; left: 824px; top: 774px; width: 80px; height: 162px; background: #fff; border-radius: 4px; box-shadow: 0 1px 4px rgba(0, 0, 0, .3); display: flex; flex-direction: column; align-items: center; padding-top: 22px; }
.zoom-sep { width: 60px; height: 2px; background: #e6e6e6; margin: 21px 0 22px; }
.attribution { position: absolute; right: 0; bottom: 0; width: 606px; height: 28px; background: rgba(255, 255, 255, .55); display: flex; align-items: center; padding-left: 10px; font: 400 21.5px Roboto, sans-serif; color: #444; white-space: nowrap; }
.attr-data { width: 242px; letter-spacing: .3px; }
.attr-terms { width: 130px; margin-left: 24px; }
.attr-report { margin-left: 22px; color: #222; letter-spacing: -.8px; }

/* form */
.quote-form { margin-left: 332px; width: 800px; flex: none; display: flex; flex-direction: column; align-items: flex-start; }
.field { display: block; width: 800px; height: 84px; border: 2px solid #ccc; background: #fff; border-radius: 0; padding: 0 24px; margin: 0 0 32px; font: 400 28px Inter, sans-serif; letter-spacing: -.1px; color: #000; outline: none; }
.field-first { margin-top: -54px; }
.field::placeholder { color: #757575; opacity: 1; }
.field-label { display: block; height: 38px; margin-bottom: 12px; font: 400 33px/37px Inter, sans-serif; letter-spacing: .4px; color: #000; white-space: nowrap; }
.marked { display: inline-block; background: #fcc8e0; width: 150px; }
.area-wrap { position: relative; width: 800px; margin-bottom: 40px; }
.field-area { height: 116px; padding: 25px 24px 0; margin: 0; resize: none; line-height: 32px; letter-spacing: .1px; }
.field-area::placeholder { background: linear-gradient(#fcc8e0, #fcc8e0) no-repeat 0 0 / 238px 100%; }
.grip { position: absolute; right: 4px; bottom: 4px; width: 14px; height: 14px; }
.submit { width: 178px; height: 80px; border: 0; background: #155a87; color: #fff; font: 400 29px Inter, sans-serif; letter-spacing: .4px; padding: 0; }

.site-footer { height: 38px; flex: none; background: #f8f4f3; border-top: 2px solid #d5d5d5; }
```
